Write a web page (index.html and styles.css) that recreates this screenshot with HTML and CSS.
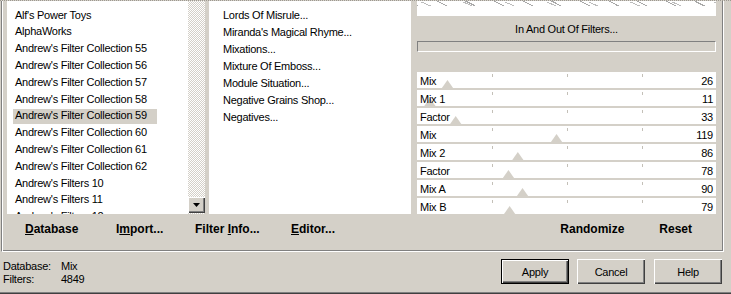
FILE: index.html
```html
<!DOCTYPE html>
<html lang="en">
<head>
    <meta charset="UTF-8">
    <meta name="viewport" content="width=device-width, initial-scale=1.0">
    <title>Filters Unlimited</title>
    <link rel="stylesheet" href="styles.css">
</head>
<body>
    <div class="top-edge"></div>

    <div class="frame">
        <div class="panes">
            <div class="category-box">
                <ul class="list category-list">
                    <li>Alf's Power Toys</li>
                    <li>AlphaWorks</li>
                    <li>Andrew's Filter Collection 55</li>
                    <li>Andrew's Filter Collection 56</li>
                    <li>Andrew's Filter Collection 57</li>
                    <li>Andrew's Filter Collection 58</li>
                    <li class="selected">Andrew's Filter Collection 59</li>
                    <li>Andrew's Filter Collection 60</li>
                    <li>Andrew's Filter Collection 61</li>
                    <li>Andrew's Filter Collection 62</li>
                    <li>Andrew's Filters 10</li>
                    <li>Andrew's Filters 11</li>
                    <li>Andrew's Filters 12</li>
                </ul>
                <div class="scrollbar">
                    <div class="scroll-down"><span class="arrow"></span></div>
                </div>
            </div>

            <ul class="list filter-list">
                <li>Lords Of Misrule...</li>
                <li>Miranda's Magical Rhyme...</li>
                <li>Mixations...</li>
                <li>Mixture Of Emboss...</li>
                <li>Module Situation...</li>
                <li>Negative Grains Shop...</li>
                <li>Negatives...</li>
            </ul>

            <div class="controls">
                <div class="preview"></div>
                <div class="filter-name">In And Out Of Filters...</div>
                <div class="progress"></div>
                <div class="sliders">
                    <div class="slider"><i class="thumb" style="--v:26"></i><span>Mix</span><span>26</span></div>
                    <div class="slider"><i class="thumb" style="--v:11"></i><span>Mix 1</span><span>11</span></div>
                    <div class="slider"><i class="thumb" style="--v:33"></i><span>Factor</span><span>33</span></div>
                    <div class="slider"><i class="thumb" style="--v:119"></i><span>Mix</span><span>119</span></div>
                    <div class="slider"><i class="thumb" style="--v:86"></i><span>Mix 2</span><span>86</span></div>
                    <div class="slider"><i class="thumb" style="--v:78"></i><span>Factor</span><span>78</span></div>
                    <div class="slider"><i class="thumb" style="--v:90"></i><span>Mix A</span><span>90</span></div>
                    <div class="slider"><i class="thumb" style="--v:79"></i><span>Mix B</span><span>79</span></div>
                </div>
            </div>
        </div>

        <div class="tools">
            <span><u>D</u>atabase</span>
            <span>I<u>m</u>port...</span>
            <span>Filter <u>I</u>nfo...</span>
            <span><u>E</u>ditor...</span>
            <span>Randomize</span>
            <span>Reset</span>
        </div>
    </div>

    <div class="status">
        <dl class="info">
            <dt>Database:</dt><dd>Mix</dd>
            <dt>Filters:</dt><dd>4849</dd>
        </dl>
        <div class="buttons">
            <button class="button default">Apply</button>
            <button class="button">Cancel</button>
            <button class="button help">Help</button>
        </div>
    </div>

    <div class="bottom-edge"></div>
</body>
</html>
```

FILE: styles.css
```css
:root {
    --face: #d4d0c8;
    --shadow: #808080;
    --dark: #404040;
    --light: #ffffff;
    --tick: #c4c0b8;
}

* {
    box-sizing: border-box;
}

html, body {
    margin: 0;
    padding: 0;
}

body {
    width: 731px;
    height: 294px;
    overflow: hidden;
    background-color: var(--face);
    color: #000;
    font-family: "Liberation Sans", Arial, sans-serif;
    font-size: 11px;
    letter-spacing: -0.25px;
}

.top-edge {
    height: 1px;
    background: repeating-linear-gradient(90deg, #9c9890 0 1px, var(--face) 1px 2px);
}

/* group box */
.frame {
    margin-left: 1px;
    width: 723px;
    height: 251px;
    border-left: 1px solid var(--shadow);
    border-right: 1px solid var(--light);
    border-bottom: 1px solid var(--light);
    box-shadow: inset 1px 0 var(--light), inset -1px -1px var(--shadow);
    display: flex;
    flex-direction: column;
}

.panes {
    height: 213px;
    display: flex;
    padding-left: 5px;
    overflow: hidden;
}

.list {
    margin: 0;
    list-style: none;
    white-space: nowrap;
    overflow: hidden;
    background-color: var(--light);
}

.category-box {
    width: 198px;
    display: flex;
}

.category-list {
    flex: 1;
    padding: 5.7px 0 0 8px;
    line-height: 16.8px;
}

.category-list .selected {
    background: linear-gradient(var(--face), var(--face)) 6px 1.5px / 144px 15px no-repeat;
    margin-left: -8px;
    padding-left: 8px;
}

.scrollbar {
    width: 17px;
    display: flex;
    flex-direction: column;
    justify-content: flex-end;
    padding-bottom: 1px;
    background: repeating-conic-gradient(var(--light) 0 25%, var(--face) 0 50%) 0 0 / 2px 2px;
}

.scroll-down {
    height: 16px;
    display: flex;
    align-items: center;
    justify-content: center;
    background-color: var(--face);
    box-shadow: inset 1px 1px var(--light), inset -1px -1px var(--dark), inset -2px -2px var(--shadow);
}

.arrow {
    width: 7px;
    height: 4px;
    background-color: #000;
    clip-path: polygon(0 0, 100% 0, 50% 100%);
}

.filter-list {
    width: 202px;
    margin-left: 4px;
    padding: 5.6px 0 0 14px;
    line-height: 17px;
}

/* filter controls */
.controls {
    width: 299px;
    margin-left: 6px;
    display: flex;
    flex-direction: column;
}

.preview {
    height: 15px;
    background:
        repeating-linear-gradient(27deg, #a8a8a8 0 1px, transparent 1px 13px) 0 0 / 100% 5px no-repeat,
        repeating-linear-gradient(24deg, transparent 0 5px, #bcbcbc 5px 6px, transparent 6px 17px) 0 1px / 100% 4px no-repeat,
        var(--light);
}

.filter-name {
    margin-top: 6px;
    line-height: 14px;
    text-align: center;
}

.progress {
    margin-top: 5px;
    height: 11px;
    border-top: 1px solid var(--shadow);
    border-left: 1px solid var(--shadow);
    border-bottom: 1px solid var(--light);
    border-right: 1px solid var(--light);
}

.sliders {
    margin-top: 20px;
    display: flex;
    flex-direction: column;
    gap: 2px;
}

.slider {
    position: relative;
    height: 16px;
    display: flex;
    justify-content: space-between;
    padding: 0 3px;
    line-height: 18px;
    background:
        linear-gradient(var(--tick), var(--tick)) 75px 2px / 1px 3px no-repeat,
        linear-gradient(var(--tick), var(--tick)) 150px 2px / 1px 3px no-repeat,
        linear-gradient(var(--tick), var(--tick)) 225px 2px / 1px 3px no-repeat,
        var(--light);
}

.slider span {
    position: relative;
}

.thumb {
    position: absolute;
    top: 8px;
    left: calc(var(--v) / 255 * 100% - 7px);
    width: 14px;
    height: 10px;
    background-color: var(--face);
    clip-path: polygon(50% 0, 100% 100%, 0 100%);
}

/* command row */
.tools {
    height: 37px;
    display: grid;
    grid-template-columns: 91px 79px 96px 1fr 99px auto;
    padding: 8px 31px 0 23px;
    font-size: 12px;
    font-weight: bold;
    letter-spacing: 0;
    line-height: 14px;
}

/* status + dialog buttons */
.status {
    height: 40px;
    display: flex;
    justify-content: space-between;
}

.info {
    margin: 0;
    padding: 8px 0 0 3px;
    display: grid;
    grid-template-columns: 58px auto;
    align-content: start;
    line-height: 13px;
}

.info dt, .info dd {
    margin: 0;
}

.buttons {
    display: flex;
    gap: 8px;
    padding: 7px 9px 0 0;
}

.button {
    width: 68px;
    height: 25px;
    padding: 0;
    border: none;
    background-color: var(--face);
    color: #000;
    font: inherit;
    letter-spacing: -0.25px;
    box-shadow: inset 1px 1px var(--light), inset -1px -1px var(--dark), inset -2px -2px var(--shadow);
}

.button.default {
    border: 1px solid #000;
}

.button.help {
    margin-left: 1px;
}

.bottom-edge {
    height: 2px;
    border-top: 1px solid var(--shadow);
    border-bottom: 1px solid var(--dark);
}
```
